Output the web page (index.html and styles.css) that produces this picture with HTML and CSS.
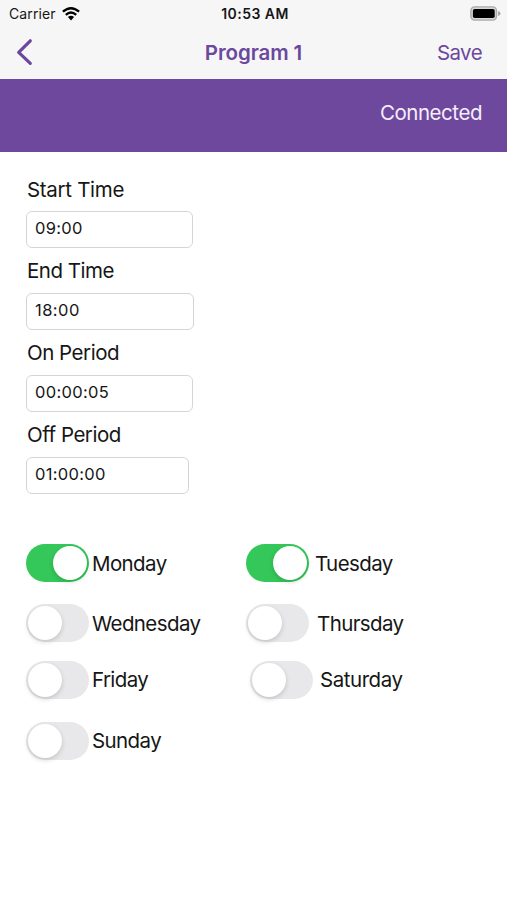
FILE: index.html
```
<!DOCTYPE html>
<html lang="en">
<head>
<meta charset="utf-8">
<meta name="viewport" content="width=device-width, initial-scale=1">
<title>Program 1</title>
<link rel="stylesheet" href="styles.css">
</head>
<body>
<header class="top">
  <div class="status">
    <div class="carrier"><span>Carrier</span>
      <svg class="wifi" width="18" height="14" viewBox="0 0 18 14" fill="none" stroke="#000" stroke-width="2.3"><path d="M.9 4.7Q9-2.3 17.1 4.7M3.8 7.8Q9 3.2 14.2 7.8"/><path d="M5.9 10.1Q9 7.5 12.1 10.1L9 13.4Z" fill="#000" stroke="none"/></svg>
    </div>
    <div class="clock">10:53 AM</div>
    <svg class="battery" width="31" height="15" viewBox="0 0 31 15"><rect x=".9" y=".9" width="25.6" height="13.2" rx="3.8" fill="#d8d7d8" stroke="#aaa" stroke-width="1.4"/><rect x="2.9" y="2.9" width="21.8" height="9.2" rx="1.8"/><path d="M28 5q2.6.7 2.6 2.5T28 10z" fill="#aaa"/></svg>
  </div>
  <nav class="nav">
    <svg class="back" width="18" height="28" viewBox="0 0 18 28" fill="none" stroke="#6b489d" stroke-width="3.2" stroke-linecap="round" stroke-linejoin="round"><path d="M14.3 2.8 2.7 14.3 14.3 25.4"/></svg>
    <h1>Program 1</h1>
    <span class="save">Save</span>
  </nav>
</header>
<div class="banner"><span>Connected</span></div>
<main>
  <section class="fields">
    <label class="start">Start Time</label><div class="field time">09:00</div>
    <label>End Time</label><div class="field wide">18:00</div>
    <label>On Period</label><div class="field time">00:00:05</div>
    <label>Off Period</label><div class="field narrow">01:00:00</div>
  </section>
  <section class="days">
    <div class="day"><i class="switch on"></i><span>Monday</span></div>
    <div class="day tue"><i class="switch on"></i><span>Tuesday</span></div>
    <div class="day"><i class="switch"></i><span>Wednesday</span></div>
    <div class="day thu"><i class="switch"></i><span>Thursday</span></div>
    <div class="day"><i class="switch"></i><span>Friday</span></div>
    <div class="day sat"><i class="switch"></i><span>Saturday</span></div>
    <div class="day sun"><i class="switch"></i><span>Sunday</span></div>
  </section>
</main>
</body>
</html>
```
FILE: styles.css
```
* { box-sizing: border-box; }
body { margin: 0; min-height: 900px; background: #fff; color: #161616; font-family: Inter, "Liberation Sans", sans-serif; font-size: 20.5px; white-space: nowrap; }
.top { height: 79px; background: #f7f6f7; }
.status { height: 27px; display: grid; grid-template-columns: 1fr auto 1fr; align-items: center; padding: 0 6px 0 9px; font-size: 14px; }
.carrier { display: flex; align-items: center; gap: 6px; letter-spacing: .1px; }
.wifi { display: block; }
.clock { font-weight: 600; font-size: 14px; letter-spacing: .45px; padding-bottom: 1px; }
.battery { justify-self: end; }
.nav { height: 52px; display: grid; grid-template-columns: 1fr auto 1fr; align-items: center; padding: 0 16px 2px; color: #6b489d; }
h1 { margin: 0; font-size: 20.5px; font-weight: 600; letter-spacing: -.1px; }
.save { justify-self: end; margin-right: 9px; letter-spacing: -.6px; }
.banner { height: 73px; padding: 0 25px 6px; display: flex; align-items: center; justify-content: flex-end; background: #6d489d; color: #f7edfb; letter-spacing: -.45px; }
main { padding: 19px 26px; }
.fields { display: grid; justify-items: start; grid-auto-rows: 40px 42px; }
label { line-height: 36px; padding-left: 1px; letter-spacing: -.48px; }
.start { line-height: 38px; letter-spacing: -.3px; }
.field { height: 37px; border: 1.5px solid #d5d5d5; border-radius: 6px; padding-left: 8px; line-height: 33px; font-size: 16.5px; letter-spacing: .3px; }
.time { width: 167px; }
.wide { width: 168px; letter-spacing: .45px; }
.narrow { width: 163px; }
.days { margin-top: 45px; display: grid; grid-template-columns: 220px 1fr; grid-template-rows: 60px 56.5px 61.5px 38px; }
.day { display: flex; height: 38px; align-items: center; gap: 3px; letter-spacing: -.6px; }
.tue { gap: 6px; }
.thu { gap: 8px; }
.sat { gap: 7px; padding-left: 4px; letter-spacing: -.45px; }
.sun span { padding-bottom: 1px; }
.switch { width: 63px; height: 38px; border-radius: 19px; background: #e8e8ea; padding: 2px; display: flex; }
.switch::after { content: ""; width: 34px; height: 34px; border-radius: 50%; background: #fff; box-shadow: 0 2px 5px rgba(0,0,0,.16); }
.switch.on { background: #34c759; justify-content: flex-end; }
```
